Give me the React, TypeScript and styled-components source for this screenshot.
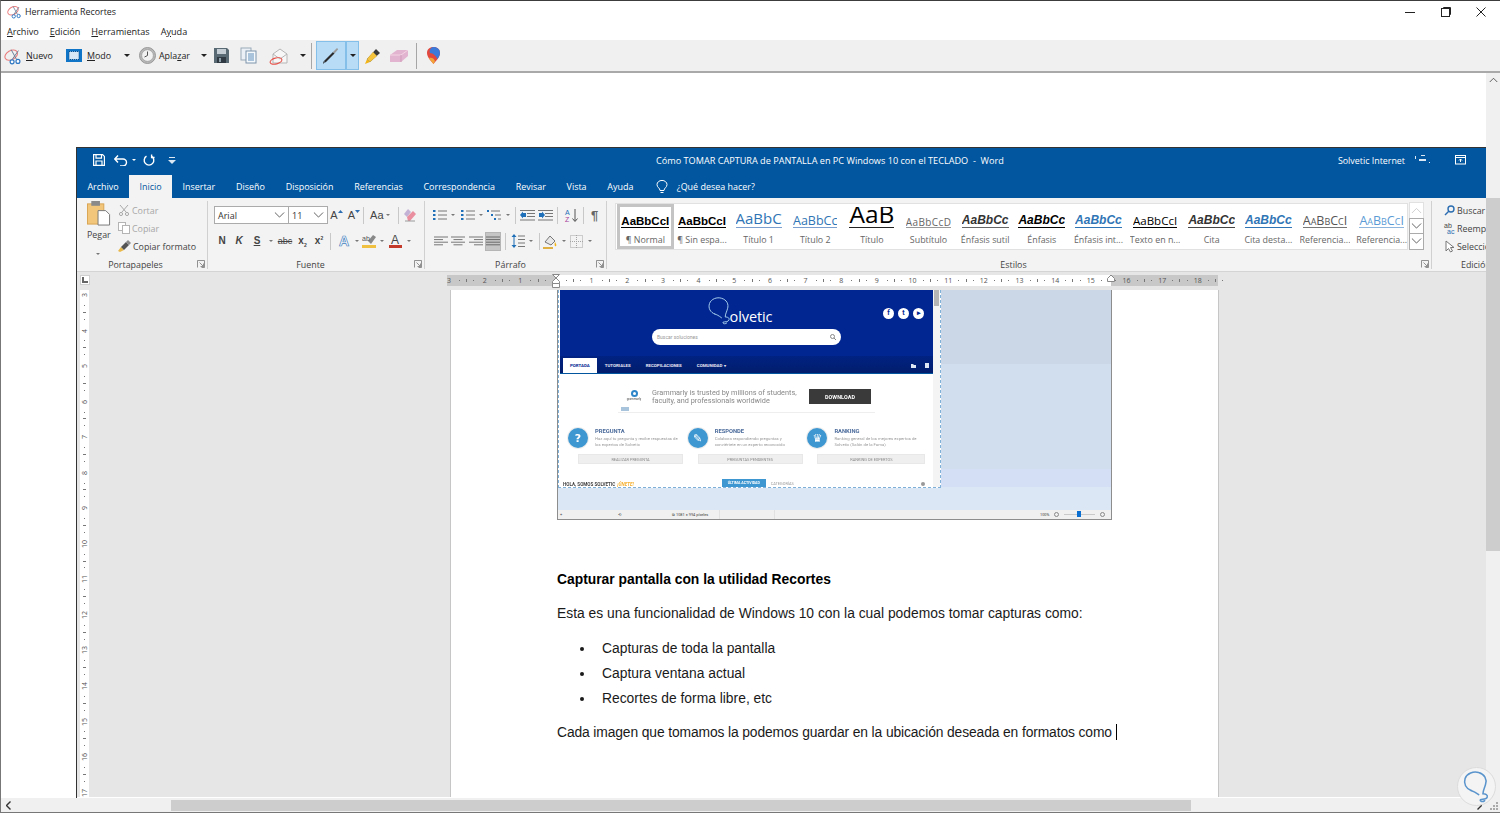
import React from "react";
import styled, { createGlobalStyle } from "styled-components";

const GlobalStyle = createGlobalStyle`
  html, body {
    margin: 0;
    padding: 0;
    overflow: hidden;
    background: #fff;
  }
  * { box-sizing: border-box; }
`;

const UI_FONT = `"Open Sans", "Noto Sans", sans-serif`;
const DOC_FONT = `"Liberation Sans", Arial, sans-serif`;

const Window = styled.div`
  position: relative;
  width: 1500px;
  height: 813px;
  display: flex;
  flex-direction: column;
  overflow: hidden;
  background: #fff;
  border-top: 1px solid #3c3c3c;
  border-left: 1px solid #777;
  font-family: ${UI_FONT};
  color: #222;
  filter: blur(0.3px);
`;

/* snipping tool chrome */
const TitleBar = styled.div`
  height: 21px;
  display: flex;
  align-items: center;
  padding-left: 6px;
  gap: 3px;
  font-size: 8.9px;
  flex: none;
`;
const WindowControls = styled.div`
  margin-left: auto;
  display: flex;
  margin-right: 1px;
`;
const ControlButton = styled.div`
  width: 35.5px;
  display: flex;
  justify-content: center;
`;
const MenuBar = styled.div`
  height: 18px;
  display: flex;
  align-items: center;
  gap: 11px;
  padding-left: 6px;
  font-size: 9.1px;
  flex: none;
  & u { text-underline-offset: 1px; }
`;
const Toolbar = styled.div`
  height: 33px;
  flex: none;
  display: flex;
  align-items: center;
  background: #f0f0f0;
  border-bottom: 2px solid #a9a9a9;
  font-size: 8.9px;
`;
const ToolButton = styled.div<{ $w: number; $gap?: number; $pl?: number }>`
  width: ${(p) => p.$w}px;
  flex: none;
  display: flex;
  align-items: center;
  justify-content: ${(p) => (p.$gap === undefined ? "center" : "flex-start")};
  gap: ${(p) => p.$gap ?? 0}px;
  padding-left: ${(p) => p.$pl ?? 0}px;
  & u { text-underline-offset: 1px; }
`;
const ToolSeparator = styled.div<{ $ml: number; $mr: number }>`
  width: 1px;
  height: 26px;
  flex: none;
  background: #a6a6a6;
  margin: 0 ${(p) => p.$mr}px 0 ${(p) => p.$ml}px;
`;
const PenButton = styled.div<{ $w: number }>`
  width: ${(p) => p.$w}px;
  height: 29px;
  flex: none;
  display: flex;
  align-items: center;
  justify-content: center;
  background: #b9dcf6;
  border: 1px solid #84bfea;
`;
const Caret = styled.span<{ $color?: string; $size?: number }>`
  display: inline-block;
  width: 0;
  height: 0;
  flex: none;
  border-left: ${(p) => p.$size ?? 3}px solid transparent;
  border-right: ${(p) => p.$size ?? 3}px solid transparent;
  border-top: ${(p) => p.$size ?? 3}px solid ${(p) => p.$color ?? "#222"};
`;

const Viewport = styled.div`
  flex: 1;
  min-height: 0;
  display: flex;
`;
const Canvas = styled.div`
  flex: 1;
  min-width: 0;
  padding: 74px 0 0 75px;
  background: #fff;
  display: flex;
`;
const VScroll = styled.div`
  width: 14px;
  flex: none;
  background: #f0f0f0;
  display: flex;
  flex-direction: column;
  align-items: center;
  padding-top: 4px;
`;
const VThumb = styled.div`
  width: 14px;
  height: 353px;
  margin-top: 115px;
  background: #cdcdcd;
`;
const HScroll = styled.div`
  height: 15px;
  flex: none;
  background: #f0f0f0;
  display: flex;
  align-items: center;
  border-bottom: 1px solid #777;
`;
const HThumb = styled.div`
  width: 1020px;
  height: 11px;
  margin-left: 160px;
  background: #cdcdcd;
`;
const HArrowRight = styled.div`
  margin-left: auto;
  margin-right: 18px;
  display: flex;
`;
const HArrowLeft = styled.div`
  margin-left: 5px;
  display: flex;
`;

/* word window */
const Word = styled.div`
  flex: 1;
  min-width: 0;
  display: flex;
  flex-direction: column;
  border-top: 1px solid #333;
  border-left: 1px solid #333;
`;
const WordTitleBar = styled.div`
  height: 26px;
  flex: none;
  background: #01569f;
  color: #fff;
  display: flex;
  align-items: center;
  padding-bottom: 2px;
  font-size: 9.15px;
`;
const QuickAccess = styled.div`
  width: 579px;
  flex: none;
  display: flex;
  align-items: center;
  padding-left: 15px;
`;
const QuickItem = styled.div<{ $w: number; $ml?: number }>`
  width: ${(p) => p.$w}px;
  margin-left: ${(p) => p.$ml ?? 0}px;
  display: flex;
  justify-content: center;
  align-items: center;
`;
const WordUser = styled.div`
  margin-left: auto;
  display: flex;
  align-items: center;
  padding-right: 11px;
  font-size: 8.9px;
  & svg + svg { margin-left: 10px; }
`;
const TabRow = styled.div`
  height: 24px;
  flex: none;
  background: #01569f;
  color: #fff;
  display: flex;
  align-items: flex-end;
  font-size: 8.95px;
  padding-left: 0;
`;
const Tab = styled.div<{ $active?: boolean }>`
  height: 23px;
  padding: 0 ${(p) => (p.$active ? "10.5px" : "10.4px")};
  display: flex;
  align-items: center;
  background: ${(p) => (p.$active ? "#f3f3f3" : "transparent")};
  color: ${(p) => (p.$active ? "#01569f" : "#fff")};
`;
const TellMe = styled.div`
  height: 23px;
  display: flex;
  align-items: center;
  margin-left: 12px;
  gap: 9px;
`;

const Ribbon = styled.div`
  height: 74px;
  flex: none;
  background: #f3f3f3;
  border-bottom: 1px solid #d4d4d4;
  display: flex;
  font-size: 8.9px;
  color: #444;
`;
const Group = styled.div<{ $w: number; $pl?: number }>`
  position: relative;
  width: ${(p) => p.$w}px;
  flex: none;
  display: flex;
  flex-direction: column;
  padding-left: ${(p) => p.$pl ?? 0}px;
  padding-top: 3px;
  &::after {
    content: "";
    position: absolute;
    right: 0;
    top: 3px;
    bottom: 2px;
    width: 1px;
    background: #d0d0d0;
  }
`;
const GroupBody = styled.div`
  height: 57px;
  flex: none;
`;
const GroupLabel = styled.div<{ $shift?: number }>`
  height: 13px;
  line-height: 13px;
  text-align: center;
  white-space: nowrap;
  font-size: 8.9px;
  margin-left: ${(p) => p.$shift ?? 0}px;
`;
const EditLabel = styled(GroupLabel)`
  text-align: left;
  margin-left: 19px;
`;
const Launcher = styled.svg`
  position: absolute;
  right: 3px;
  bottom: 3px;
`;
const ClipboardBody = styled.div`
  display: flex;
  height: 100%;
`;
const PasteButton = styled.div`
  width: 41px;
  padding-left: 10px;
  display: flex;
  flex-direction: column;
  align-items: flex-start;
`;
const PasteLabel = styled.div`
  margin-top: 3px;
  line-height: 12px;
`;
const PasteCaret = styled.div`
  margin: 4px 0 0 9px;
`;
const ClipList = styled.div`
  display: flex;
  flex-direction: column;
`;
const ClipRow = styled.div<{ $disabled?: boolean }>`
  height: 18px;
  display: flex;
  align-items: center;
  gap: 2px;
  color: ${(p) => (p.$disabled ? "#a6a6a6" : "#444")};
  white-space: nowrap;
`;
const IconRow = styled.div<{ $h?: number }>`
  height: ${(p) => p.$h ?? 25}px;
  display: flex;
  align-items: center;
`;
const Cell = styled.div<{ $w: number; $active?: boolean }>`
  width: ${(p) => p.$w}px;
  height: ${(p) => (p.$active ? "19px" : "auto")};
  flex: none;
  display: flex;
  align-items: center;
  justify-content: center;
  background: ${(p) => (p.$active ? "#c5c5c5" : "transparent")};
  border: ${(p) => (p.$active ? "1px solid #b5b5b5" : "0")};
`;
const RowSeparator = styled.div<{ $ml: number; $mr: number }>`
  width: 1px;
  height: 17px;
  flex: none;
  background: #c8c8c8;
  margin: 0 ${(p) => p.$mr}px 0 ${(p) => p.$ml}px;
`;
const LetterIcon = styled.span<{ $bold?: boolean; $italic?: boolean; $under?: boolean; $size?: number; $color?: string; $outline?: string }>`
  font-family: ${DOC_FONT};
  font-weight: ${(p) => (p.$bold ? 700 : 400)};
  font-style: ${(p) => (p.$italic ? "italic" : "normal")};
  text-decoration: ${(p) => (p.$under ? "underline" : "none")};
  font-size: ${(p) => p.$size ?? 10}px;
  color: ${(p) => p.$color ?? "#444"};
  -webkit-text-stroke: ${(p) => (p.$outline ? `0.7px ${p.$outline}` : "0")};
  line-height: 1;
  & sub, & sup { font-size: 5px; line-height: 0; }
`;
const GrowWrap = styled.span`
  display: flex;
  align-items: flex-start;
  gap: 0;
`;
const Combo = styled.div<{ $w: number }>`
  width: ${(p) => p.$w}px;
  height: 18px;
  flex: none;
  background: #fff;
  border: 1px solid #ababab;
  margin-right: -1px;
  display: flex;
  align-items: center;
  justify-content: space-between;
  padding: 0 3px;
  font-family: ${UI_FONT};
  font-size: 9px;
  color: #333;
`;

/* styles gallery */
const Gallery = styled.div`
  width: 793px;
  height: 47px;
  margin: 2px 0 0 4px;
  background: #fff;
  border: 1px solid #e1e1e1;
  display: flex;
  padding-left: 1px;
`;
const StyleTile = styled.div<{ $selected?: boolean }>`
  width: 56.65px;
  height: 45px;
  flex: none;
  display: flex;
  flex-direction: column;
  align-items: center;
  border: 3px solid ${(p) => (p.$selected ? "#c4c4c4" : "transparent")};
  overflow: hidden;
`;
const StylePreview = styled.div`
  height: 25px;
  width: 100%;
  display: flex;
  justify-content: center;
  align-items: flex-end;
  overflow: hidden;
`;
const StyleSample = styled.span<{
  $family: string;
  $size: number;
  $color: string;
  $bold?: boolean;
  $italic?: boolean;
  $line: string;
  $spacing?: number;
  $caps?: boolean;
}>`
  display: block;
  max-width: 48px;
  overflow: hidden;
  white-space: nowrap;
  font-family: ${(p) => p.$family};
  font-size: ${(p) => p.$size}px;
  font-weight: ${(p) => (p.$bold ? 700 : 400)};
  font-style: ${(p) => (p.$italic ? "italic" : "normal")};
  font-variant: ${(p) => (p.$caps ? "small-caps" : "normal")};
  letter-spacing: ${(p) => p.$spacing ?? 0}px;
  color: ${(p) => p.$color};
  line-height: 1.05;
  border-bottom: 1px solid ${(p) => p.$line};
  margin-bottom: 3px;
`;
const StyleName = styled.div`
  font-size: 8.9px;
  color: #666;
  line-height: 13px;
  margin-top: 2px;
  white-space: nowrap;
`;
const GalleryRail = styled.div`
  width: 15px;
  height: 47px;
  margin: 2px 0 0 1px;
  display: flex;
  flex-direction: column;
  background: #fff;
`;
const RailButton = styled.div<{ $faint?: boolean }>`
  flex: 1;
  display: flex;
  align-items: center;
  justify-content: center;
  border: 1px solid ${(p) => (p.$faint ? "#e1e1e1" : "#ababab")};
  margin-top: -1px;
`;
const StylesBody = styled.div`
  display: flex;
  height: 100%;
`;
const EditList = styled.div`
  display: flex;
  flex-direction: column;
  overflow: hidden;
  width: 45px;
`;
const EditRow = styled.div`
  height: 18px;
  display: flex;
  align-items: center;
  white-space: nowrap;
`;
const EditIcon = styled.div`
  width: 15px;
  flex: none;
  display: flex;
  justify-content: center;
`;
const EditGroup = styled.div`
  flex: 1;
  min-width: 0;
  padding: 3px 0 0 10px;
  display: flex;
  flex-direction: column;
  overflow: hidden;
`;

/* rulers */
const WordBody = styled.div`
  position: relative;
  flex: 1;
  min-height: 0;
  background: #e6e6e6;
  display: flex;
  flex-direction: column;
  overflow: hidden;
  border-bottom: 1px solid #fff;
`;
const RulerRow = styled.div`
  position: relative;
  height: 18px;
  flex: none;
  display: flex;
  align-items: center;
  padding-bottom: 2px;
`;
const RulerCorner = styled.div`
  width: 10px;
  height: 10px;
  margin-left: 3px;
  background: #fff;
  border: 1px solid #cfcfcf;
  display: flex;
  align-items: center;
  justify-content: center;
`;
const RulerTrack = styled.div`
  position: relative;
  width: 771px;
  height: 11px;
  margin-left: 357px;
  background: linear-gradient(to right, #c8c8c8 0 109px, #fff 109px 664px, #c8c8c8 664px);
  display: flex;
  align-items: center;
`;
const RulerCells = styled.div`
  display: flex;
  margin-left: -2px;
  align-items: center;
`;
const RulerCell = styled.div`
  width: 35.67px;
  flex: none;
  display: flex;
  align-items: center;
`;
const RulerNumber = styled.span`
  width: 8px;
  flex: none;
  text-align: center;
  font-size: 7px;
  line-height: 9px;
  color: #555;
`;
const RulerMarks = styled.span`
  flex: 1;
  display: flex;
  align-items: center;
  justify-content: space-evenly;
`;
const RulerMark = styled.i<{ $tall?: boolean }>`
  display: block;
  width: 1px;
  height: ${(p) => (p.$tall ? 3 : 1)}px;
  background: #777;
`;
const IndentMarker = styled.svg<{ $x: number }>`
  position: absolute;
  left: ${(p) => p.$x}px;
  top: -1px;
`;
const DocArea = styled.div`
  flex: 1;
  min-height: 0;
  display: flex;
`;
const VRuler = styled.div`
  width: 9px;
  margin-left: 3px;
  background: #fff;
  flex: none;
  display: flex;
  flex-direction: column;
  align-items: center;
`;
const VRulerCell = styled.div`
  height: 35.55px;
  flex: none;
  display: flex;
  flex-direction: column;
  align-items: center;
`;
const VRulerNumber = styled.span`
  font-size: 7px;
  line-height: 9px;
  height: 9px;
  color: #555;
  writing-mode: vertical-rl;
  transform: rotate(180deg);
  text-align: center;
`;
const VRulerMarks = styled.span`
  flex: 1;
  display: flex;
  flex-direction: column;
  align-items: center;
  justify-content: space-evenly;
`;
const VRulerMark = styled.i<{ $tall?: boolean }>`
  display: block;
  height: 1px;
  width: ${(p) => (p.$tall ? 3 : 1)}px;
  background: #777;
`;
const Page = styled.div`
  width: 769px;
  flex: none;
  margin-left: 361px;
  background: #fff;
  border-left: 1px solid #c6c6c6;
  border-right: 1px solid #c6c6c6;
  padding-left: 106px;
  font-family: ${DOC_FONT};
  font-size: 13.85px;
  color: #1a1a1a;
`;
const Heading = styled.div`
  font-weight: 700;
  margin-top: 51px;
  line-height: 17px;
  color: #000;
`;
const Para = styled.div<{ $mt: number; $spacing?: number }>`
  margin-top: ${(p) => p.$mt}px;
  line-height: 17px;
  letter-spacing: ${(p) => p.$spacing ?? 0}px;
  white-space: nowrap;
`;
const BulletList = styled.ul`
  margin: 18px 0 0;
  padding: 0 0 0 45px;
  list-style: none;
`;
const BulletItem = styled.li`
  position: relative;
  height: 25px;
  line-height: 17px;
  &::before {
    content: "";
    position: absolute;
    left: -22px;
    top: 7px;
    width: 4px;
    height: 4px;
    border-radius: 50%;
    background: #1a1a1a;
  }
`;
const TextCaret = styled.span`
  display: inline-block;
  width: 1px;
  height: 16px;
  margin-left: 4px;
  background: #000;
  vertical-align: -3px;
`;

/* the picture pasted into the document */
const Shot = styled.div`
  width: 555px;
  height: 230px;
  display: flex;
  flex-direction: column;
  justify-content: space-between;
  border: 1px solid #8d8d8d;
  border-top: 0;
  background: linear-gradient(to bottom, #cbd6e6 0 74px, #d0deee 74px 179px, #d4dff5 179px 197px, #dbe7f4 197px);
`;
const CaptureWindow = styled.div`
  width: 383px;
  height: 198px;
  flex: none;
  display: flex;
  background: #fff;
  padding-left: 1px;
  overflow: hidden;
  border-left: 1px dashed #7fb0d8;
  border-right: 1px dashed #7fb0d8;
  border-bottom: 1px dashed #7fb0d8;
`;
const CapturePage = styled.div`
  width: 373px;
  flex: none;
  display: flex;
  flex-direction: column;
  filter: blur(0.25px);
  font-family: "Roboto", ${DOC_FONT};
`;
const CaptureScroll = styled.div`
  flex: 1;
  background: #f4f4f4;
  padding: 0 1px;
`;
const CaptureThumb = styled.div`
  height: 16px;
  background: #b5b5b5;
`;
const SiteHeader = styled.div`
  position: relative;
  height: 66px;
  flex: none;
  background: #012691;
  display: flex;
  flex-direction: column;
  align-items: center;
`;
const SiteLogo = styled.div`
  display: flex;
  align-items: flex-end;
  height: 34px;
  margin-top: 2px;
  margin-left: -16px;
  color: #fff;
`;
const SiteLogoText = styled.span`
  font-family: ${UI_FONT};
  font-size: 14.5px;
  line-height: 19px;
  margin-left: -5px;
  letter-spacing: -0.1px;
`;
const SiteSocial = styled.div`
  position: absolute;
  right: 9px;
  top: 18px;
  display: flex;
  gap: 4px;
`;
const SiteSocialDot = styled.div`
  width: 11px;
  height: 11px;
  border-radius: 50%;
  background: #fff;
  color: #012691;
  font-size: 7px;
  font-weight: 700;
  line-height: 11px;
  text-align: center;
`;
const SiteSearch = styled.div`
  width: 189px;
  height: 16px;
  margin-top: 3px;
  background: #fff;
  border-radius: 8px;
  display: flex;
  align-items: center;
  justify-content: space-between;
  padding: 0 5px;
  font-size: 5px;
  color: #999;
`;
const SiteNav = styled.div`
  height: 18px;
  flex: none;
  background: linear-gradient(to bottom, #012282, #011d6c);
  border-bottom: 1px solid #01569f;
  display: flex;
  align-items: flex-end;
  padding-left: 3px;
  font-size: 4.4px;
  font-weight: 700;
  color: #e8e8f4;
`;
const SiteNavItem = styled.div<{ $active?: boolean; $ml: number }>`
  height: 15px;
  display: flex;
  align-items: center;
  justify-content: center;
  margin-left: ${(p) => p.$ml}px;
  padding: 0 ${(p) => (p.$active ? 7 : 0)}px;
  background: ${(p) => (p.$active ? "#fff" : "transparent")};
  color: ${(p) => (p.$active ? "#012691" : "#e8e8f4")};
  white-space: nowrap;
`;
const SiteNavIcons = styled.div`
  margin-left: auto;
  height: 15px;
  display: flex;
  align-items: center;
  gap: 9px;
  padding-right: 4px;
`;
const AdRow = styled.div`
  height: 39px;
  flex: none;
  margin: 0 58px;
  padding: 15px 0 0 5px;
  border-bottom: 1px solid #eee;
  display: flex;
  position: relative;
`;
const AdBrand = styled.div`
  width: 22px;
  margin-top: 1px;
  display: flex;
  flex-direction: column;
  align-items: center;
  font-size: 3px;
  color: #444;
`;
const AdText = styled.div`
  width: 157px;
  margin-left: 7px;
  font-size: 7.3px;
  line-height: 8px;
  color: #888;
  white-space: nowrap;
`;
const AdButton = styled.div`
  width: 62px;
  height: 15px;
  background: #3a3a3a;
  color: #fff;
  font-size: 5.4px;
  font-weight: 700;
  display: flex;
  align-items: center;
  justify-content: center;
  letter-spacing: 0.1px;
`;
const AdMark = styled.div`
  position: absolute;
  left: 3px;
  bottom: 1px;
  width: 8px;
  height: 4px;
  background: #a8c4dd;
`;
const Cards = styled.div`
  display: grid;
  grid-template-columns: 119.7px 119.7px 120px;
  padding: 15px 0 0 8px;
`;
const Card = styled.div`
  display: grid;
  grid-template-columns: 27px 1fr;
  grid-template-rows: 26px 10px;
`;
const CardBadge = styled.div`
  width: 20px;
  height: 20px;
  border-radius: 50%;
  background: #3e97d1;
  display: flex;
  align-items: center;
  justify-content: center;
  box-shadow: 0 0 0 1px #eee;
`;
const CardTitle = styled.div`
  font-size: 5.8px;
  font-weight: 700;
  color: #4a6a9a;
  line-height: 6px;
  margin-bottom: 2px;
`;
const CardText = styled.div`
  font-size: 4.25px;
  color: #9a9a9a;
  line-height: 6.2px;
  white-space: nowrap;
`;
const CardButton = styled.div<{ $w: number }>`
  grid-column: 1 / 3;
  margin-left: 10px;
  width: ${(p) => p.$w}px;
  height: 10px;
  background: #efefef;
  border: 1px solid #e8e8e8;
  color: #888;
  font-size: 3.9px;
  display: flex;
  align-items: center;
  justify-content: center;
`;
const CaptureFooter = styled.div`
  margin-top: 13px;
  padding-left: 3px;
  display: flex;
  align-items: flex-end;
  height: 10px;
  font-size: 4.6px;
  font-weight: 700;
  color: #444;
`;
const FooterJoin = styled.span`
  color: #f5b031;
  font-style: italic;
  margin-left: 2px;
`;
const FooterTab = styled.div`
  width: 44px;
  height: 8px;
  margin-left: 88px;
  background: #3e97d1;
  color: #fff;
  font-size: 3.6px;
  display: flex;
  align-items: center;
  justify-content: center;
`;
const FooterLink = styled.span`
  margin-left: 5px;
  font-size: 3.9px;
  font-weight: 400;
  color: #999;
  line-height: 7px;
`;
const FooterGear = styled.span`
  margin-left: auto;
  margin-right: 8px;
  width: 4px;
  height: 4px;
  border-radius: 50%;
  background: #999;
  margin-bottom: 1px;
`;
const ShotStatus = styled.div`
  height: 9px;
  flex: none;
  background: #f0f0f0;
  display: flex;
  align-items: center;
  font-family: "Roboto", ${DOC_FONT};
  font-size: 3.9px;
  color: #444;
`;
const StatusCell = styled.div<{ $w: number; $line?: boolean }>`
  width: ${(p) => p.$w}px;
  height: 100%;
  flex: none;
  display: flex;
  align-items: center;
  padding-left: 2px;
  border-right: ${(p) => (p.$line ? "1px solid #e1e1e1" : "0")};
`;
const ZoomTrack = styled.div`
  position: relative;
  width: 31px;
  height: 1px;
  margin: 0 5px;
  background: #c9c9c9;
`;
const ZoomThumb = styled.div`
  position: absolute;
  left: 13px;
  top: -3px;
  width: 4px;
  height: 6px;
  background: #0a6fd0;
`;
const ZoomDot = styled.div<{ $ml?: number }>`
  width: 5px;
  height: 5px;
  flex: none;
  margin-left: ${(p) => p.$ml ?? 0}px;
  border: 1px solid #888;
  border-radius: 50%;
`;

/* corner badge that sits above the picture */
const Watermark = styled.div`
  position: absolute;
  left: 1456px;
  top: 766px;
  width: 39px;
  height: 39px;
  border-radius: 50%;
  background: #f4f4f4;
  border: 1px solid #dcdcdc;
  display: flex;
  align-items: center;
  justify-content: center;
`;
const Grip = styled.svg`
  position: absolute;
  right: 2px;
  bottom: 3px;
`;

const SnipIcon = ({ size }: { size: number }) => (
  <svg width={size} height={size} viewBox="0 0 20 20" fill="none">
    <ellipse cx="8" cy="9" rx="7.500" ry="5" transform="rotate(-30 8 9)" stroke="#ea7c7c" strokeWidth="1.200" />
    <path d="M8 3l6 11M16 4L9 14" stroke="#6b7f99" strokeWidth="1.100" />
    <circle cx="15.500" cy="16" r="2.200" fill="#fff" stroke="#2f78c4" strokeWidth="1.300" />
    <circle cx="9" cy="16.500" r="2.200" fill="#fff" stroke="#2f78c4" strokeWidth="1.300" />
  </svg>
);

const ModeIcon = () => (
  <svg width="16" height="13" viewBox="0 0 16 13">
    <rect width="16" height="13" fill="#1175c7" />
    <rect x="3" y="2.500" width="10" height="8" fill="#dbe8f5" stroke="#0b4f8f" strokeDasharray="1 1" />
  </svg>
);

const ClockIcon = () => (
  <svg width="17" height="17" viewBox="0 0 17 17">
    <circle cx="8.500" cy="8.500" r="8" fill="#b8b8b8" stroke="#999" />
    <circle cx="8.500" cy="8.500" r="5.800" fill="#f2f2f2" stroke="#8a8a8a" strokeWidth=".5" />
    <path d="M8.500 4.500v4l-3 1.500" stroke="#555" fill="none" />
  </svg>
);

const FloppyIcon = () => (
  <svg width="15" height="15" viewBox="0 0 15 15">
    <path d="M0 0h13l2 2v13H0z" fill="#5a6a74" />
    <rect x="3" y="1" width="9" height="5" fill="#c4ced4" />
    <rect x="3" y="9" width="9" height="6" fill="#2f3a42" />
    <rect x="5" y="10" width="2" height="4" fill="#90a0aa" />
  </svg>
);

const CopyDocs = () => (
  <svg width="17" height="17" viewBox="0 0 17 17" fill="none">
    <rect x="1" y="1" width="10" height="12" fill="#eaf0f6" stroke="#9aa9b8" />
    <rect x="6" y="4" width="10" height="12" fill="#f6f9fc" stroke="#7d93aa" />
    <path d="M8 7h6M8 9h6M8 11h6M8 13h6" stroke="#5e8ebd" />
  </svg>
);

const MailIcon = () => (
  <svg width="20" height="18" viewBox="0 0 20 18" fill="none">
    <path d="M4 7l7-5 7 5v9H4z" fill="#f7f7f7" stroke="#b5b5b5" />
    <path d="M4 7l7 5 7-5" stroke="#b5b5b5" />
    <ellipse cx="7" cy="14" rx="6" ry="3" transform="rotate(-15 7 14)" stroke="#e8524a" strokeWidth="1.100" />
  </svg>
);

const PenIcon = () => (
  <svg width="18" height="18" viewBox="0 0 18 18">
    <path d="M1 17l.8-3L3 15z" fill="#111" />
    <path d="M2 14l9-9 1.500 1.500-9 9z" fill="#2b2b2b" />
    <path d="M11 5l4-4 1.200 1.200-3.700 4.300z" fill="#9a9a9a" />
  </svg>
);

const MarkerIcon = () => (
  <svg width="17" height="18" viewBox="0 0 17 18">
    <path d="M1 17l2-5 3 3z" fill="#f3b416" />
    <path d="M3 12L12 2l4 4-10 9z" fill="#3a3a3a" />
    <path d="M9 5l4 4-7 6-3-3z" fill="#f6c43c" />
  </svg>
);

const EraserIcon = () => (
  <svg width="18" height="12" viewBox="0 0 18 12">
    <path d="M0 5l7-5h11v6l-7 6H0z" fill="#e3b4cf" />
    <path d="M0 5h11l7-5" fill="none" stroke="#f3d5e5" />
    <path d="M11 5v7" stroke="#cf9bb9" />
  </svg>
);

const PaintIcon = () => (
  <svg width="13" height="17" viewBox="0 0 13 17">
    <path d="M6.500 0C10.500 0 13 2.500 13 6c0 4-4 8-6.500 11C4 14 0 10 0 6c0-3.500 2.500-6 6.500-6z" fill="#e2483d" />
    <path d="M6.500 0C10.500 0 13 2.500 13 6c0 2-1 4-2.500 6C9 9 6 6 3 6 2 3 4 0 6.500 0z" fill="#3d79d8" />
    <path d="M6.500 17C5 15 3 13 2 11c2-1 5 0 6 3z" fill="#f2a63a" />
  </svg>
);

const SolveticBulb = ({ size, color, width }: { size: number; color: string; width: number }) => (
  <svg width={size} height={size} viewBox="0 0 40 40" fill="none">
    <path
      d="M13 24C7 22 4 16 6 10 8 4 16 1 22 3c7 2 10 8 8 14-1 4-3 7-3 11 3 0 6 1 5 4-1 3-6 2-8 3-1 2 3 3 5 1"
      stroke={color}
      strokeWidth={width}
      strokeLinecap="round"
    />
    <path d="M13 24c3 1 5 2 9 5" stroke={color} strokeWidth={width} strokeLinecap="round" />
  </svg>
);

const PasteIcon = () => (
  <svg width="24" height="26" viewBox="0 0 24 26">
    <rect x="0" y="3" width="17" height="21" fill="#f3c77b" stroke="#d8a452" />
    <rect x="4" y="0" width="9" height="5" fill="#8a8a8a" />
    <path d="M11 10h8l4 4v11H11z" fill="#fff" stroke="#777" />
  </svg>
);

const ScissorsIcon = () => (
  <svg width="12" height="12" viewBox="0 0 12 12" fill="none" stroke="#a9a9a9">
    <path d="M2 1l6 7M10 1L4 8" />
    <circle cx="3" cy="10" r="1.600" />
    <circle cx="9" cy="10" r="1.600" />
  </svg>
);

const CopySmall = () => (
  <svg width="12" height="12" viewBox="0 0 12 12" fill="#fff" stroke="#b4b4b4">
    <rect x=".5" y=".5" width="7" height="8" />
    <rect x="4.500" y="3.500" width="7" height="8" />
  </svg>
);

const BrushIcon = () => (
  <svg width="13" height="12" viewBox="0 0 13 12">
    <path d="M0 11l3-4 3 3-4 2z" fill="#e9b94b" />
    <path d="M3 7l5-5 3 3-5 5z" fill="#555" />
    <path d="M8 2l2-2 3 3-2 2z" fill="#8a8a8a" />
  </svg>
);

const LauncherIcon = () => (
  <Launcher width="8" height="8" viewBox="0 0 8 8" fill="none" stroke="#777">
    <path d="M.5 7.500v-7h7v7h-3M2.500 2.500l4 4M3.500 6.500h3v-3" strokeWidth=".8" />
  </Launcher>
);

const Chevron = ({ size, up, color }: { size: number; up?: boolean; color?: string }) => (
  <svg width={size} height={size / 2 + 1} viewBox="0 0 12 7" fill="none" stroke={color ?? "#555"}>
    <path d={up ? "M1 6.500l5-5 5 5" : "M1 .5l5 5 5-5"} />
  </svg>
);

const GrowIcon = ({ up }: { up?: boolean }) => (
  <GrowWrap>
    <LetterIcon $size={11}>A</LetterIcon>
    <svg width="5" height="4" viewBox="0 0 5 4" fill="#2b6db0">
      <path d={up ? "M2.500 0L5 3H0z" : "M2.500 3L0 0h5z"} />
    </svg>
  </GrowWrap>
);

const EraseIcon = () => (
  <svg width="14" height="14" viewBox="0 0 14 14">
    <path d="M5 1l3 3-4 5-3-3z" fill="#7a4fa8" opacity=".4" />
    <path d="M4 9l6-6 3 3-6 7H5z" fill="#e98f9f" />
    <path d="M2 13h10" stroke="#9a9a9a" />
  </svg>
);

const Lines = ({ kind }: { kind: "left" | "center" | "right" | "full" }) => {
  const rows = kind === "full" ? [14, 14, 14, 14] : [14, 9, 14, 9];
  return (
    <svg width="14" height="10" viewBox="0 0 14 10" stroke={kind === "full" ? "#6a6a6a" : "#777"}>
      {rows.map((w, i) => {
        const x = kind === "left" || kind === "full" ? 0 : kind === "center" ? (14 - w) / 2 : 14 - w;
        return <path key={i} d={`M${x} ${1 + i * 2.6}h${w}`} />;
      })}
    </svg>
  );
};

const ListIcon = ({ color }: { color: string }) => (
  <svg width="14" height="12" viewBox="0 0 14 12">
    <rect x="0" y="1" width="2.500" height="2" fill={color} />
    <rect x="0" y="5" width="2.500" height="2" fill={color} />
    <rect x="0" y="9" width="2.500" height="2" fill={color} />
    <path d="M5 2h9M5 6h9M5 10h9" stroke="#777" />
  </svg>
);

const MultiIcon = () => (
  <svg width="15" height="12" viewBox="0 0 15 12">
    <rect x="0" y="1" width="2" height="2" fill="#1e6fb8" />
    <rect x="4" y="5" width="2" height="2" fill="#1e6fb8" />
    <rect x="7" y="9" width="2" height="2" fill="#1e6fb8" />
    <path d="M4 2h9M8 6h6M11 10h3" stroke="#777" />
  </svg>
);

const IndentIcon = ({ more }: { more?: boolean }) => (
  <svg width="15" height="11" viewBox="0 0 15 11">
    <path d="M0 .5h15M7 3.500h8M7 6.500h8M0 10h15" stroke="#777" />
    <path d={more ? "M1 3h3V1.500L7 5 4 8.500V7H1z" : "M6 3H3V1.500L0 5l3 3.500V7h3z"} fill="#1e6fb8" />
  </svg>
);

const SortIcon = () => (
  <svg width="14" height="15" viewBox="0 0 14 15">
    <path d="M11 1v12M8.500 10.500L11 13.500l2.500-3" stroke="#555" fill="none" />
    <text x="1" y="7" fontSize="7" fill="#1e6fb8" fontFamily="Liberation Sans">A</text>
    <text x="1" y="14" fontSize="7" fill="#a43f9a" fontFamily="Liberation Sans">Z</text>
  </svg>
);

const LineSpacingIcon = () => (
  <svg width="14" height="14" viewBox="0 0 14 14">
    <path d="M3 0l2.500 3h-5zM3 14l2.500-3h-5z" fill="#1e6fb8" />
    <path d="M3 3v8" stroke="#1e6fb8" />
    <path d="M7 2h7M7 5.500h7M7 9h7M7 12.500h7" stroke="#777" />
  </svg>
);

const ShadeIcon = () => (
  <svg width="15" height="15" viewBox="0 0 15 15">
    <path d="M2 8l5-6 5 5-4 4z" fill="#e8e8e8" stroke="#777" />
    <path d="M12 8c1 2 2 3 1 4s-2-1-1-4z" fill="#f3b416" />
    <path d="M0 13h10v2H0z" fill="#e0b040" />
  </svg>
);

const BorderIcon = () => (
  <svg width="13" height="13" viewBox="0 0 13 13" fill="none" stroke="#a5a5a5" strokeDasharray="1 1">
    <rect x=".5" y=".5" width="12" height="12" />
    <path d="M6.500 0v13M0 6.500h13" />
  </svg>
);

const HighlightIcon = () => (
  <svg width="15" height="14" viewBox="0 0 15 14">
    <path d="M6 7l5-6 3 2-5 7z" fill="#888" />
    <rect x="0" y="11" width="14" height="3" fill="#f0c040" />
    <text x="0" y="7" fontSize="7" fill="#555" fontFamily="Liberation Sans">ab</text>
  </svg>
);

const FontColorIcon = () => (
  <svg width="14" height="14" viewBox="0 0 14 14">
    <text x="2" y="10" fontSize="12" fontFamily="Liberation Sans" fill="#444">A</text>
    <rect x="0" y="11" width="13" height="3" fill="#c43a2a" />
  </svg>
);

const Dropper = () => <Caret $size={2} $color="#777" />;

type StyleDef = {
  sample: string;
  name: string;
  family: string;
  size: number;
  color: string;
  line: string;
  bold?: boolean;
  italic?: boolean;
  spacing?: number;
  caps?: boolean;
  selected?: boolean;
};

const ARIAL = DOC_FONT;
const STYLE_DEFS: StyleDef[] = [
  { sample: "AaBbCcI", name: "¶ Normal", family: ARIAL, size: 11.5, color: "#000", line: "#000", bold: true, selected: true },
  { sample: "AaBbCcI", name: "¶ Sin espa...", family: ARIAL, size: 11.5, color: "#000", line: "#000", bold: true },
  { sample: "AaBbC", name: "Título 1", family: UI_FONT, size: 15, color: "#2f75b5", line: "#7ba0d0" },
  { sample: "AaBbCc", name: "Título 2", family: UI_FONT, size: 12.5, color: "#2f75b5", line: "#7ba0d0" },
  { sample: "AaB", name: "Título", family: UI_FONT, size: 24.5, color: "#000", line: "#222" },
  { sample: "AaBbCcD", name: "Subtítulo", family: UI_FONT, size: 10, color: "#666", line: "#999", spacing: 0.4 },
  { sample: "AaBbCc", name: "Énfasis sutil", family: ARIAL, size: 12, color: "#333", line: "#666", bold: true, italic: true },
  { sample: "AaBbCc", name: "Énfasis", family: ARIAL, size: 12, color: "#000", line: "#000", bold: true, italic: true },
  { sample: "AaBbCc", name: "Énfasis int...", family: ARIAL, size: 12, color: "#2f75b5", line: "#2f75b5", bold: true, italic: true },
  { sample: "AaBbCcI", name: "Texto en n...", family: UI_FONT, size: 11.5, color: "#000", line: "#000" },
  { sample: "AaBbCc", name: "Cita", family: ARIAL, size: 12, color: "#333", line: "#444", bold: true, italic: true },
  { sample: "AaBbCc", name: "Cita desta...", family: ARIAL, size: 12, color: "#2f75b5", line: "#2f75b5", bold: true, italic: true },
  { sample: "AaBbCcI", name: "Referencia...", family: UI_FONT, size: 12.5, color: "#555", line: "#777", caps: true },
  { sample: "AaBbCcI", name: "Referencia...", family: UI_FONT, size: 12.5, color: "#5b9bd5", line: "#8fb6dd", caps: true },
];

const RULER_LABELS = ["3", "2", "1", "", ...Array.from({ length: 18 }, (_, i) => String(i + 1))];
const VRULER_LABELS = Array.from({ length: 15 }, (_, i) => String(i + 3));

const CARDS = [
  {
    title: "PREGUNTA",
    text: ["Haz aquí tu pregunta y recibe respuestas de", "los expertos de Solvetic"],
    action: "REALIZAR PREGUNTA",
    glyph: "?",
    width: 105,
  },
  {
    title: "RESPONDE",
    text: ["Colabora respondiendo preguntas y", "conviértete en un experto reconocido"],
    action: "PREGUNTAS PENDIENTES",
    glyph: "✎",
    width: 105,
  },
  {
    title: "RANKING",
    text: ["Ranking general de los mejores expertos de", "Solvetic (Salón de la Fama)"],
    action: "RANKING DE EXPERTOS",
    glyph: "♛",
    width: 108,
  },
];

const BadgeGlyph = styled.span`
  color: #fff;
  font-size: 11px;
  font-weight: 700;
  line-height: 1;
  font-family: "DejaVu Sans", sans-serif;
`;

const ClipItem = ({ icon, label, disabled }: { icon: React.ReactNode; label: string; disabled?: boolean }) => (
  <ClipRow $disabled={disabled}>
    {icon}
    {label}
  </ClipRow>
);

function App() {
  return (
    <>
      <GlobalStyle />
      <Window>
        <TitleBar>
          <SnipIcon size={15} />
          Herramienta Recortes
          <WindowControls>
            <ControlButton>
              <svg width="10" height="10" viewBox="0 0 10 10" stroke="#222"><path d="M0 5.500h10" /></svg>
            </ControlButton>
            <ControlButton>
              <svg width="10" height="10" viewBox="0 0 10 10" fill="none" stroke="#222"><rect x=".5" y="1.500" width="8" height="8" /><path d="M2.500 1.500v-1h7v7h-1" /></svg>
            </ControlButton>
            <ControlButton>
              <svg width="10" height="10" viewBox="0 0 10 10" stroke="#222"><path d="M.5.5l9 9M9.500.5l-9 9" /></svg>
            </ControlButton>
          </WindowControls>
        </TitleBar>
        <MenuBar>
          <span><u>A</u>rchivo</span>
          <span><u>E</u>dición</span>
          <span><u>H</u>erramientas</span>
          <span>A<u>y</u>uda</span>
        </MenuBar>
        <Toolbar>
          <ToolButton $w={65} $gap={4} $pl={3}>
            <SnipIcon size={18} />
            <span><u>N</u>uevo</span>
          </ToolButton>
          <ToolButton $w={51} $gap={5}>
            <ModeIcon />
            <span><u>M</u>odo</span>
          </ToolButton>
          <ToolButton $w={19}><Caret /></ToolButton>
          <ToolButton $w={62} $gap={3} $pl={3}>
            <ClockIcon />
            <span>Apla<u>z</u>ar</span>
          </ToolButton>
          <ToolButton $w={11}><Caret /></ToolButton>
          <ToolButton $w={24}><FloppyIcon /></ToolButton>
          <ToolButton $w={31}><CopyDocs /></ToolButton>
          <ToolButton $w={30}><MailIcon /></ToolButton>
          <ToolButton $w={17}><Caret /></ToolButton>
          <ToolSeparator $ml={0} $mr={4} />
          <PenButton $w={30}><PenIcon /></PenButton>
          <PenButton $w={13}><Caret /></PenButton>
          <ToolButton $w={26}><MarkerIcon /></ToolButton>
          <ToolButton $w={27}><EraserIcon /></ToolButton>
          <ToolSeparator $ml={4} $mr={10} />
          <ToolButton $w={13}><PaintIcon /></ToolButton>
        </Toolbar>
        <Viewport>
          <Canvas>
            <Word>
              <WordTitleBar>
                <QuickAccess>
                  <QuickItem $w={14}>
                    <svg width="12" height="12" viewBox="0 0 12 12" fill="none" stroke="#fff" strokeWidth="1.200"><path d="M.6.6h9l1.800 1.800v9H.6zM3 .6v3.500h5.500V.6M3 11.400V7h6v4.400" /></svg>
                  </QuickItem>
                  <QuickItem $w={14} $ml={8}>
                    <svg width="14" height="12" viewBox="0 0 14 12" fill="none" stroke="#fff" strokeWidth="1.400"><path d="M1 5h8a3.500 3.500 0 0 1 0 7H6M4 1.500L.8 5 4 8.500" /></svg>
                  </QuickItem>
                  <QuickItem $w={12}><Caret $size={2} $color="#fff" /></QuickItem>
                  <QuickItem $w={18}>
                    <svg width="12" height="12" viewBox="0 0 12 12" fill="none" stroke="#fff" strokeWidth="1.400"><path d="M8.500 2.200a4.800 4.800 0 1 1-5 0M8.600.5v3h3" /></svg>
                  </QuickItem>
                  <QuickItem $w={28}>
                    <svg width="8" height="7" viewBox="0 0 8 7" fill="#dce8f4"><path d="M1 0h6v1H1zM0 3h8L4 7z" /></svg>
                  </QuickItem>
                </QuickAccess>
                <span>Cómo TOMAR CAPTURA de PANTALLA en PC Windows 10 con el TECLADO &nbsp;-&nbsp; Word</span>
                <WordUser>
                  <span>Solvetic Internet</span>
                  <svg width="30" height="10" viewBox="0 0 30 10" fill="#dce8f4"><path d="M10 1h1v3h-1zM14 4h7v2h-7zM24 7h1v1h-1z" /><path d="M16 0h4v1h-4z" /></svg>
                  <svg width="30" height="10" viewBox="0 0 30 10" fill="none" stroke="#fff"><rect x="10.500" y=".5" width="10" height="8.500" /><path d="M10 2.500h11M15.500 7V4M14 5.500l1.500-1.500L17 5.500" /></svg>
                </WordUser>
              </WordTitleBar>
              <TabRow>
                <Tab>Archivo</Tab>
                <Tab $active>Inicio</Tab>
                <Tab>Insertar</Tab>
                <Tab>Diseño</Tab>
                <Tab>Disposición</Tab>
                <Tab>Referencias</Tab>
                <Tab>Correspondencia</Tab>
                <Tab>Revisar</Tab>
                <Tab>Vista</Tab>
                <Tab>Ayuda</Tab>
                <TellMe>
                  <svg width="12" height="14" viewBox="0 0 12 14" fill="none" stroke="#fff"><path d="M4 10.500C4 8 1 7.500 1 4.600a5 4.200 0 0 1 10 0c0 2.900-3 3.400-3 5.900zM4.500 12.500h3" /></svg>
                  ¿Qué desea hacer?
                </TellMe>
              </TabRow>
              <Ribbon>
                <Group $w={131}>
                  <GroupBody>
                    <ClipboardBody>
                      <PasteButton>
                        <PasteIcon />
                        <PasteLabel>Pegar</PasteLabel>
                        <PasteCaret><Dropper /></PasteCaret>
                      </PasteButton>
                      <ClipList>
                        <ClipItem disabled icon={<ScissorsIcon />} label="Cortar" />
                        <ClipItem disabled icon={<CopySmall />} label="Copiar" />
                        <ClipItem icon={<BrushIcon />} label="Copiar formato" />
                      </ClipList>
                    </ClipboardBody>
                  </GroupBody>
                  <GroupLabel $shift={-14}>Portapapeles</GroupLabel>
                  <LauncherIcon />
                </Group>
                <Group $w={217} $pl={6}>
                  <GroupBody>
                    <IconRow $h={28}>
                      <Combo $w={75}>Arial<Chevron size={11} /></Combo>
                      <Combo $w={40}>11<Chevron size={11} /></Combo>
                      <Cell $w={19}><GrowIcon up /></Cell>
                      <Cell $w={16}><GrowIcon /></Cell>
                      <RowSeparator $ml={1} $mr={3} />
                      <Cell $w={26}>
                        <LetterIcon $size={11}>Aa</LetterIcon>&nbsp;<Dropper />
                      </Cell>
                      <RowSeparator $ml={5} $mr={4} />
                      <Cell $w={14}><EraseIcon /></Cell>
                    </IconRow>
                    <IconRow $h={24}>
                      <Cell $w={16}><LetterIcon $bold>N</LetterIcon></Cell>
                      <Cell $w={18}><LetterIcon $bold $italic>K</LetterIcon></Cell>
                      <Cell $w={18}><LetterIcon $bold $under>S</LetterIcon></Cell>
                      <Cell $w={9}><Dropper /></Cell>
                      <Cell $w={20}><LetterIcon $size={9}><s>abc</s></LetterIcon></Cell>
                      <Cell $w={15}><LetterIcon $bold>x<sub>2</sub></LetterIcon></Cell>
                      <Cell $w={18}><LetterIcon $bold>x<sup>2</sup></LetterIcon></Cell>
                      <RowSeparator $ml={2} $mr={3} />
                      <Cell $w={20}><LetterIcon $size={14} $bold $color="#fff" $outline="#3f7fc0">A</LetterIcon></Cell>
                      <Cell $w={6}><Dropper /></Cell>
                      <Cell $w={18}><HighlightIcon /></Cell>
                      <Cell $w={8}><Dropper /></Cell>
                      <Cell $w={20}><FontColorIcon /></Cell>
                      <Cell $w={6}><Dropper /></Cell>
                    </IconRow>
                  </GroupBody>
                  <GroupLabel $shift={-18}>Fuente</GroupLabel>
                  <LauncherIcon />
                </Group>
                <Group $w={182} $pl={7}>
                  <GroupBody>
                    <IconRow $h={28}>
                      <Cell $w={16}><ListIcon color="#1e6fb8" /></Cell>
                      <Cell $w={10}><Dropper /></Cell>
                      <Cell $w={20}><ListIcon color="#1e6fb8" /></Cell>
                      <Cell $w={6}><Dropper /></Cell>
                      <Cell $w={20}><MultiIcon /></Cell>
                      <Cell $w={8}><Dropper /></Cell>
                      <RowSeparator $ml={3} $mr={4} />
                      <Cell $w={15}><IndentIcon /></Cell>
                      <Cell $w={21}><IndentIcon more /></Cell>
                      <RowSeparator $ml={1} $mr={3} />
                      <Cell $w={20}><SortIcon /></Cell>
                      <RowSeparator $ml={2} $mr={1} />
                      <Cell $w={19}><LetterIcon $size={13} $bold $color="#666">¶</LetterIcon></Cell>
                    </IconRow>
                    <IconRow $h={24}>
                      <Cell $w={17}><Lines kind="left" /></Cell>
                      <Cell $w={18}><Lines kind="center" /></Cell>
                      <Cell $w={18}><Lines kind="right" /></Cell>
                      <Cell $w={16} $active><Lines kind="full" /></Cell>
                      <RowSeparator $ml={4} $mr={3} />
                      <Cell $w={18}><LineSpacingIcon /></Cell>
                      <Cell $w={7}><Dropper /></Cell>
                      <RowSeparator $ml={5} $mr={1} />
                      <Cell $w={18}><ShadeIcon /></Cell>
                      <Cell $w={9}><Dropper /></Cell>
                      <Cell $w={16}><BorderIcon /></Cell>
                      <Cell $w={12}><Dropper /></Cell>
                    </IconRow>
                  </GroupBody>
                  <GroupLabel $shift={-18}>Párrafo</GroupLabel>
                  <LauncherIcon />
                </Group>
                <Group $w={825} $pl={4}>
                  <GroupBody>
                    <StylesBody>
                      <Gallery>
                        {STYLE_DEFS.map((s, i) => (
                          <StyleTile key={i} $selected={s.selected}>
                            <StylePreview>
                              <StyleSample
                                $family={s.family}
                                $size={s.size}
                                $color={s.color}
                                $bold={s.bold}
                                $italic={s.italic}
                                $line={s.line}
                                $spacing={s.spacing}
                                $caps={s.caps}
                              >
                                {s.sample}
                              </StyleSample>
                            </StylePreview>
                            <StyleName>{s.name}</StyleName>
                          </StyleTile>
                        ))}
                      </Gallery>
                      <GalleryRail>
                        <RailButton $faint><Chevron size={11} up color="#ccc" /></RailButton>
                        <RailButton><Chevron size={11} /></RailButton>
                        <RailButton><Chevron size={11} /></RailButton>
                      </GalleryRail>
                    </StylesBody>
                  </GroupBody>
                  <GroupLabel $shift={-16}>Estilos</GroupLabel>
                  <LauncherIcon />
                </Group>
                <EditGroup>
                  <GroupBody>
                    <EditList>
                      <EditRow>
                        <EditIcon>
                          <svg width="11" height="11" viewBox="0 0 11 11" fill="none" stroke="#2b6db0" strokeWidth="1.400"><circle cx="7" cy="4" r="3" /><path d="M5 6l-4 4" /></svg>
                        </EditIcon>
                        Buscar
                      </EditRow>
                      <EditRow>
                        <EditIcon>
                          <svg width="14" height="13" viewBox="0 0 14 13"><text x="1" y="6" fontSize="7" fill="#444" fontFamily="Liberation Sans">ab</text><text x="4" y="12" fontSize="7" fill="#2b6db0" fontFamily="Liberation Sans">ac</text></svg>
                        </EditIcon>
                        Reemplazar
                      </EditRow>
                      <EditRow>
                        <EditIcon>
                          <svg width="10" height="13" viewBox="0 0 10 13" fill="#fff" stroke="#777"><path d="M1 1v10l2.500-2.500L5.500 12l2-1-2-3.500H9z" /></svg>
                        </EditIcon>
                        Seleccionar
                      </EditRow>
                    </EditList>
                  </GroupBody>
                  <EditLabel>Edición</EditLabel>
                </EditGroup>
              </Ribbon>
              <WordBody>
                <RulerRow>
                  <RulerCorner>
                    <svg width="6" height="6" viewBox="0 0 6 6" fill="#666"><path d="M0 0h2v4h4v2H0z" /></svg>
                  </RulerCorner>
                  <RulerTrack>
                    <RulerCells>
                      {RULER_LABELS.map((label, i) => (
                        <RulerCell key={i}>
                          <RulerNumber>{label}</RulerNumber>
                          <RulerMarks>
                            <RulerMark />
                            <RulerMark $tall />
                            <RulerMark />
                          </RulerMarks>
                        </RulerCell>
                      ))}
                    </RulerCells>
                    <IndentMarker $x={105} width="8" height="15" viewBox="0 0 8 15" fill="#fff" stroke="#888">
                      <path d="M.5.5h7L4 4zM4 4l3.500 3.500v2h-7v-2zM.5 9.500h7v4h-7z" />
                    </IndentMarker>
                    <IndentMarker $x={660} width="8" height="9" viewBox="0 0 8 9" fill="#fff" stroke="#888">
                      <path d="M4 1l3.500 3.500v3h-7v-3z" />
                    </IndentMarker>
                  </RulerTrack>
                </RulerRow>
                <DocArea>
                  <VRuler>
                    {VRULER_LABELS.map((label) => (
                      <VRulerCell key={label}>
                        <VRulerNumber>{label}</VRulerNumber>
                        <VRulerMarks>
                          <VRulerMark />
                          <VRulerMark $tall />
                          <VRulerMark />
                        </VRulerMarks>
                      </VRulerCell>
                    ))}
                  </VRuler>
                  <Page>
                    <Shot>
                      <CaptureWindow>
                        <CapturePage>
                          <SiteHeader>
                            <SiteLogo>
                              <SolveticBulb size={30} color="#a9d0ee" width={1.300} />
                              <SiteLogoText>olvetic</SiteLogoText>
                            </SiteLogo>
                            <SiteSearch>
                              Buscar soluciones
                              <svg width="6" height="6" viewBox="0 0 6 6" fill="none" stroke="#888"><circle cx="2.500" cy="2.500" r="2" /><path d="M4 4l2 2" /></svg>
                            </SiteSearch>
                            <SiteSocial>
                              <SiteSocialDot>f</SiteSocialDot>
                              <SiteSocialDot>t</SiteSocialDot>
                              <SiteSocialDot>▸</SiteSocialDot>
                            </SiteSocial>
                          </SiteHeader>
                          <SiteNav>
                            <SiteNavItem $active $ml={0}>PORTADA</SiteNavItem>
                            <SiteNavItem $ml={8}>TUTORIALES</SiteNavItem>
                            <SiteNavItem $ml={15}>RECOPILACIONES</SiteNavItem>
                            <SiteNavItem $ml={15}>COMUNIDAD ▾</SiteNavItem>
                            <SiteNavIcons>
                              <svg width="5" height="4" viewBox="0 0 5 4" fill="#dfe6f4"><path d="M0 0h2l1 1h2v3H0z" /></svg>
                              <svg width="4" height="5" viewBox="0 0 4 5" fill="#dfe6f4"><rect width="4" height="5" /></svg>
                            </SiteNavIcons>
                          </SiteNav>
                          <AdRow>
                            <AdBrand>
                              <svg width="7" height="7" viewBox="0 0 7 7"><circle cx="3.500" cy="3.500" r="3.500" fill="#2f86c9" /><circle cx="3.500" cy="3.500" r="1.500" fill="#fff" /></svg>
                              grammarly
                            </AdBrand>
                            <AdText>
                              Grammarly is trusted by millions of students,
                              <br />
                              faculty, and professionals worldwide
                            </AdText>
                            <AdButton>DOWNLOAD</AdButton>
                            <AdMark />
                          </AdRow>
                          <Cards>
                            {CARDS.map((c) => (
                              <Card key={c.title}>
                                <CardBadge><BadgeGlyph>{c.glyph}</BadgeGlyph></CardBadge>
                                <div>
                                  <CardTitle>{c.title}</CardTitle>
                                  {c.text.map((line) => (
                                    <CardText key={line}>{line}</CardText>
                                  ))}
                                </div>
                                <CardButton $w={c.width}>{c.action}</CardButton>
                              </Card>
                            ))}
                          </Cards>
                          <CaptureFooter>
                            HOLA, SOMOS SOLVETIC<FooterJoin>¡ÚNETE!</FooterJoin>
                            <FooterTab>ÚLTIMA ACTIVIDAD</FooterTab>
                            <FooterLink>CATEGORÍAS</FooterLink>
                            <FooterGear />
                          </CaptureFooter>
                        </CapturePage>
                        <CaptureScroll><CaptureThumb /></CaptureScroll>
                      </CaptureWindow>
                      <ShotStatus>
                        <StatusCell $w={58}>+</StatusCell>
                        <StatusCell $w={54}>⟲</StatusCell>
                        <StatusCell $w={50} $line>⧉ 1081 × 994 píxeles</StatusCell>
                        <StatusCell $w={55} $line />
                        <StatusCell $w={265} />
                        <span>100%</span>
                        <ZoomDot $ml={5} />
                        <ZoomTrack><ZoomThumb /></ZoomTrack>
                        <ZoomDot />
                      </ShotStatus>
                    </Shot>
                    <Heading>Capturar pantalla con la utilidad Recortes</Heading>
                    <Para $mt={17}>Esta es una funcionalidad de Windows 10 con la cual podemos tomar capturas como:</Para>
                    <BulletList>
                      <BulletItem>Capturas de toda la pantalla</BulletItem>
                      <BulletItem>Captura ventana actual</BulletItem>
                      <BulletItem>Recortes de forma libre, etc</BulletItem>
                    </BulletList>
                    <Para $mt={9} $spacing={-0.12}>
                      Cada imagen que tomamos la podemos guardar en la ubicación deseada en formatos como
                      <TextCaret />
                    </Para>
                  </Page>
                </DocArea>
              </WordBody>
            </Word>
          </Canvas>
          <VScroll>
            <Chevron size={9} up color="#333" />
            <VThumb />
          </VScroll>
        </Viewport>
        <HScroll>
          <HArrowLeft>
            <svg width="5" height="9" viewBox="0 0 5 9" fill="none" stroke="#333" strokeWidth="1.400"><path d="M4.500.5l-4 4 4 4" /></svg>
          </HArrowLeft>
          <HThumb />
          <HArrowRight>
            <svg width="5" height="9" viewBox="0 0 5 9" fill="none" stroke="#333" strokeWidth="1.400"><path d="M.5.5l4 4-4 4" /></svg>
          </HArrowRight>
        </HScroll>
        <Watermark>
          <SolveticBulb size={34} color="#5a94cc" width={1.800} />
        </Watermark>
        <Grip width="9" height="9" viewBox="0 0 9 9" fill="#aaa">
          <path d="M7 1h2v2H7zM4 4h2v2H4zM7 4h2v2H7zM1 7h2v2H1zM4 7h2v2H4zM7 7h2v2H7z" />
        </Grip>
      </Window>
    </>
  );
}

export default App;
